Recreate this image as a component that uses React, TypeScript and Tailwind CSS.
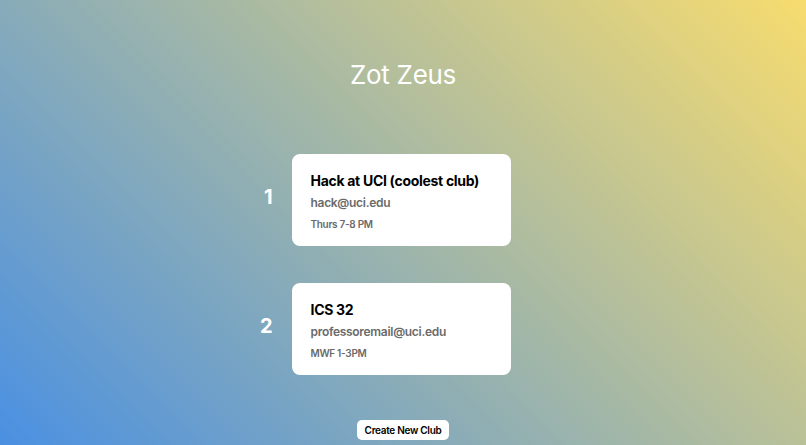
export default function App() {
  const clubs = [
    { name: "Hack at UCI (coolest club)", email: "hack@uci.edu", time: "Thurs 7-8 PM" },
    { name: "ICS 32", email: "professoremail@uci.edu", time: "MWF 1-3PM" },
  ];
  return (
    <div className="w-[806px] h-[445px] overflow-hidden bg-[linear-gradient(45deg,#4a90e2,#f7dc6f)] font-['Inter',sans-serif] flex flex-col items-center">
      <h1 className="mt-[59px] text-[26px] leading-[32px] tracking-[-0.3px] text-white font-normal">Zot Zeus</h1>
      <div className="mt-[63px] flex flex-col gap-[37px]">
        {clubs.map((c, i) => (
          <div key={i} className="flex items-center">
            <div className="w-[58px] pr-[19px] pb-[6px] text-right text-[20px] font-bold text-white">{i + 1}</div>
            <div className="w-[219px] h-[92px] bg-white rounded-[8px] pl-[19px] pt-[18px]">
              <div className="text-[14px] leading-[18px] tracking-[-0.3px] font-bold text-black">{c.name}</div>
              <div className="mt-[6px] text-[12px] leading-[14px] tracking-[-0.3px] font-semibold text-[#6a6a6a]">{c.email}</div>
              <div className="mt-[8px] text-[10px] leading-[12px] tracking-[-0.3px] font-semibold text-[#6a6a6a]">{c.time}</div>
            </div>
            <div className="w-[62px]" />
          </div>
        ))}
      </div>
      <button className="mt-[45px] h-[20px] px-[8px] bg-white rounded-[5px] text-[10px] tracking-[-0.3px] font-semibold text-black">Create New Club</button>
    </div>
  );
}
